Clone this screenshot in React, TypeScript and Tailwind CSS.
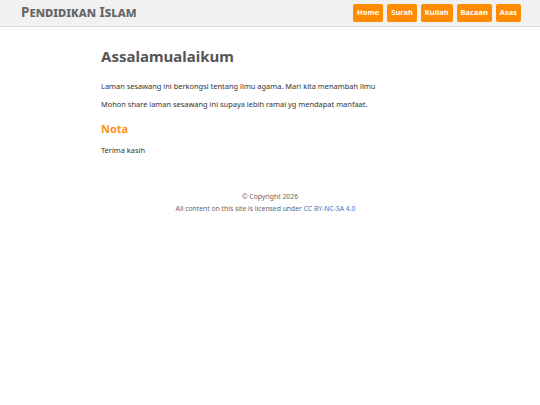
import React from "react";

const menu = ["Home", "Surah", "Kuliah", "Bacaan", "Asas"];

const App = () => {
  return (
    <div className="min-h-[405px] bg-white font-['Noto_Sans',sans-serif] text-[#333]">
      {/* Header */}
      <header className="h-[27px] bg-[#f1f1f1] border-b border-[#dcdcdc] flex items-center justify-between pl-[21px] pr-[19px]">
        <h1 className="text-[13.5px] font-bold text-[#666] leading-none [font-variant:small-caps]">
          Pendidikan Islam
        </h1>
        <nav className="flex gap-[4px]">
          {menu.map((m) => (
            <a
              key={m}
              href="#"
              className="h-[18px] px-[4px] flex items-center rounded-[2px] bg-[#ff8c00] text-white text-[7.5px] font-bold leading-none"
            >
              {m}
            </a>
          ))}
        </nav>
      </header>

      {/* Content */}
      <main className="mx-auto w-[338px] pt-[19px]">
        <h2 className="text-[15px] font-bold text-[#555] leading-[20px]">Assalamualaikum</h2>
        <p className="mt-[14px] text-[7.45px] leading-[12px]">
          Laman sesawang ini berkongsi tentang ilmu agama. Mari kita menambah ilmu
        </p>
        <p className="mt-[6px] text-[7.45px] leading-[12px]">
          Mohon share laman sesawang ini supaya lebih ramai yg mendapat manfaat.
        </p>
        <h3 className="mt-[11px] text-[11px] font-bold text-[#f7931e] leading-[16px]">Nota</h3>
        <p className="mt-[7px] text-[7.45px] leading-[12px]">Terima kasih</p>
      </main>

      {/* Footer */}
      <footer className="mt-[35px] text-center text-[6.8px] leading-[12px] text-[#666]">
        <p>© Copyright 2026</p>
        <p className="pr-[9px]">
          All content on this site is licensed under{" "}
          <a href="#" className="text-[#3a7bbf]">CC BY-NC-SA 4.0</a>
        </p>
      </footer>
    </div>
  );
};

export default App;
